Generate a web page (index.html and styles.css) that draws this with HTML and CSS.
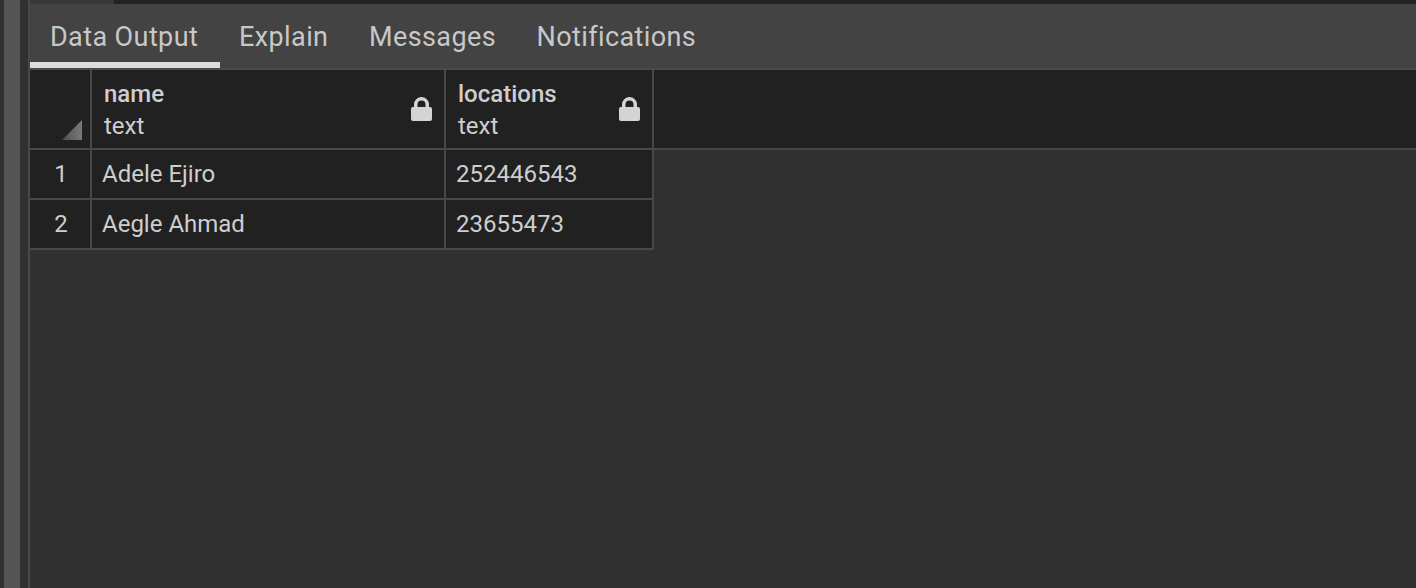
FILE: index.html
```html
<!DOCTYPE html>
<html lang="en">
<head>
    <meta charset="UTF-8">
    <meta name="viewport" content="width=device-width, initial-scale=1.0">
    <title>Data Output</title>
    <link rel="stylesheet" href="styles.css">
</head>
<body>
    <div class="app">
        <div class="rail-edge"></div>
        <div class="rail"></div>
        <div class="rail-gap"></div>
        <div class="main">
            <div class="top-strip">
                <div class="top-tab"></div>
            </div>
            <div class="tabs">
                <div class="tab active">Data Output</div>
                <div class="tab">Explain</div>
                <div class="tab">Messages</div>
                <div class="tab">Notifications</div>
            </div>
            <div class="grid">
                <div class="head-row">
                    <div class="corner"><div class="corner-mark"></div></div>
                    <div class="head-cell name-col">
                        <div class="head-text">
                            <div class="col-name">name</div>
                            <div class="col-type">text</div>
                        </div>
                        <svg class="lock" viewBox="0 0 21 24"><path d="M3 10V7.500a7.500 7.500 0 0 1 15 0V10h1a2 2 0 0 1 2 2v10a2 2 0 0 1-2 2H2a2 2 0 0 1-2-2V12a2 2 0 0 1 2-2zM6.500 10h8V7.500a4 4 0 0 0-8 0z" fill-rule="evenodd"/></svg>
                    </div>
                    <div class="head-cell loc-col">
                        <div class="head-text">
                            <div class="col-name">locations</div>
                            <div class="col-type">text</div>
                        </div>
                        <svg class="lock" viewBox="0 0 21 24"><path d="M3 10V7.500a7.500 7.500 0 0 1 15 0V10h1a2 2 0 0 1 2 2v10a2 2 0 0 1-2 2H2a2 2 0 0 1-2-2V12a2 2 0 0 1 2-2zM6.500 10h8V7.500a4 4 0 0 0-8 0z" fill-rule="evenodd"/></svg>
                    </div>
                </div>
                <div class="row">
                    <div class="num">1</div>
                    <div class="cell name-col">Adele Ejiro</div>
                    <div class="cell loc-col">252446543</div>
                </div>
                <div class="row">
                    <div class="num">2</div>
                    <div class="cell name-col">Aegle Ahmad</div>
                    <div class="cell loc-col">23655473</div>
                </div>
            </div>
        </div>
    </div>
</body>
</html>
```

FILE: styles.css
```css
html, body {
    margin: 0;
    padding: 0;
    height: 100%;
    overflow: hidden;
}

body {
    font-family: 'Roboto', sans-serif;
    background-color: #303030;
    color: #cecece;
}

.app {
    display: flex;
    height: 588px;
}

.rail-edge {
    width: 4px;
    background-color: #303030;
}

.rail {
    width: 16px;
    background-color: #545454;
}

.rail-gap {
    width: 8px;
    background-color: #303030;
    border-right: 2px solid #484848;
}

.main {
    flex: 1;
    min-width: 0;
}

.top-strip {
    height: 4px;
    background-color: #222222;
}

.top-tab {
    width: 84px;
    height: 4px;
    background-color: #383838;
}

.tabs {
    display: flex;
    height: 64px;
    background-color: #434343;
    border-bottom: 2px solid #4a4a4a;
}

.tab {
    padding: 17px 20.25px 0;
    font-size: 27px;
    line-height: 32px;
    letter-spacing: 0.4px;
    color: #c8c8c8;
}

.tab.active {
    border-bottom: 6px solid #dcdcdc;
    height: 41px;
    width: 150px;
    padding-left: 20px;
    padding-right: 19.5px;
    margin-right: -0.75px;
}

.grid {
    display: flex;
    flex-direction: column;
}

.head-row {
    display: flex;
    height: 78px;
    background-color: #212121;
    border-bottom: 2px solid #484848;
}

.row {
    display: flex;
    height: 48px;
    width: 624px;
    border-bottom: 2px solid #484848;
    background-color: #212121;
}

.corner,
.num {
    width: 60px;
    border-right: 2px solid #484848;
}

.corner {
    position: relative;
}

.corner-mark {
    position: absolute;
    right: 8px;
    bottom: 8px;
    width: 20px;
    height: 20px;
    background: linear-gradient(90deg, #4e4e4e, #7a7a7a);
    clip-path: polygon(100% 0, 100% 100%, 0 100%);
}

.num {
    text-align: center;
    font-size: 24px;
    line-height: 48px;
    text-indent: 2px;
}

.name-col {
    width: 354px;
    border-right: 2px solid #484848;
    box-sizing: border-box;
}

.loc-col {
    width: 208px;
    border-right: 2px solid #484848;
    box-sizing: border-box;
}

.head-cell {
    display: flex;
    align-items: center;
    justify-content: space-between;
    padding: 0 12px;
}

.head-text {
    padding-top: 2px;
}

.col-name {
    font-size: 24px;
    font-weight: 500;
    line-height: 32px;
}

.col-type {
    font-size: 24px;
    line-height: 32px;
}

.lock {
    width: 21px;
    height: 24px;
    fill: #d4d4d4;
}

.cell {
    padding-left: 10px;
    font-size: 24px;
    line-height: 48px;
}
```
